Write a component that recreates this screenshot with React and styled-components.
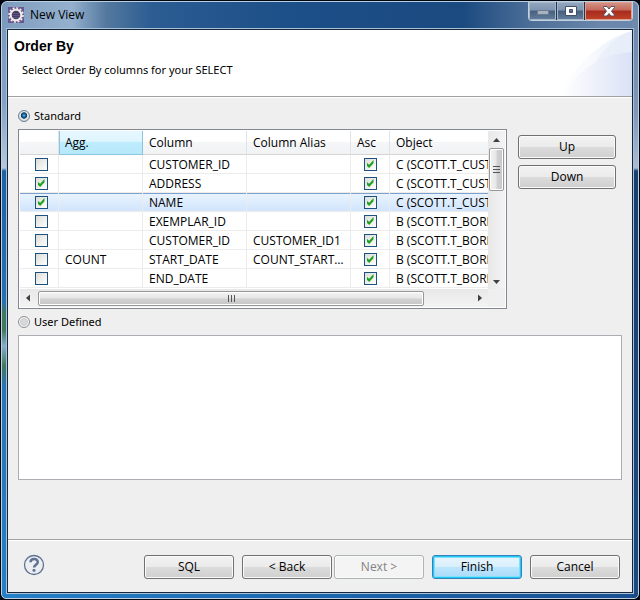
import React, { useState } from 'react';
import styled, { createGlobalStyle, css } from 'styled-components';

const Global = createGlobalStyle`
  *, *::before, *::after { box-sizing: border-box; }
  body { margin: 0; background: #06142c; }
  body, button, input, textarea {
    font-family: "Open Sans", "Segoe UI", sans-serif;
    font-size: 12px;
    line-height: 16px;
    color: #000;
  }
`;

const Window = styled.div`
  min-height: 100vh;
  display: flex;
  flex-direction: column;
  padding: 1px;
  background: #02060e;
`;

const Frame = styled.div`
  flex: 1;
  display: flex;
  flex-direction: column;
  border: 1px solid #b9cfe4;
  border-radius: 6px 6px 5px 5px;
  padding: 0 5px 5px;
  background:
    linear-gradient(#6b87ab 0, #7f97b8 110px, #a9bcd2 166px, #17406f 169px, #1a4a84 100%) right 0 top 0 / 6px 100% no-repeat,
    linear-gradient(#7898bd 0, #84a2c5 100px, #b4c8dc 166px, #1f62a4 169px, #2a70b0 300px, #3f7a5c 312px, #3f7a5c 328px, #86aec8 344px, #3f7a5c 364px, #2a74b4 384px, #2580c6 100%) left 0 top 0 / 6px 100% no-repeat,
    linear-gradient(90deg, #2580c6 0, #1c66ae 50%, #1a4f90 100%) bottom / 100% 6px no-repeat,
    linear-gradient(90deg, #7f9dbf 0, #94b0ce 70px, #54799f 104px, #2b5c92 150px, #1c4e87 300px, #1b4a80 460px, #4d6f98 530px, #6b87ab 600px);
`;

const TitleBar = styled.header`
  height: 27px;
  display: flex;
  align-items: flex-start;
`;

const Title = styled.h1`
  flex: 1;
  display: flex;
  align-items: center;
  gap: 6px;
  margin: 0;
  padding: 5px 0 0 1px;
  font-size: 12px;
  line-height: 16px;
  font-weight: 400;
`;

const Captions = styled.div`
  display: flex;
  border: 1px solid #c3d0de;
  border-top: 0;
  border-radius: 0 0 4px 4px;
  overflow: hidden;
`;

const Caption = styled.button`
  width: ${p => (p.$close ? 47 : 28)}px;
  height: 18px;
  padding: 0;
  display: grid;
  place-items: center;
  border: 0;
  border-right: ${p => (p.$close ? '0' : '1px solid #24344c')};
  box-shadow: inset 0 0 0 1px ${p => (p.$close ? '#e0a090' : '#a5b6c9')};
  background: ${p => (p.$close
    ? 'linear-gradient(#d5968a 0, #c4685a 45%, #a82a1c 50%, #c0442a 100%)'
    : 'linear-gradient(#94a8c0 0, #7e94b0 45%, #46607f 50%, #64809f 100%)')};
`;

const Client = styled.main`
  flex: 1;
  display: flex;
  flex-direction: column;
  border: 1px solid #16263c;
  outline: 1px solid #a9c2da;
  background: #efefef;
`;

const Banner = styled.section`
  height: 67px;
  position: relative;
  padding: 8px 6px 0;
  background: #fff;
  border-bottom: 1px solid #a0a0a0;
`;

const BannerArt = styled.svg`
  position: absolute;
  right: 0;
  top: 0;
`;

const Heading = styled.h2`
  margin: 0;
  font: 700 14px/16px "Liberation Sans", Arial, sans-serif;
`;

const Lead = styled.p`
  margin: 8px 0 0 8px;
  font-family: "Noto Sans", "Segoe UI", sans-serif;
  font-size: 11px;
`;

const Body = styled.section`
  flex: 1;
  padding: 10px 10px 0;
  border-top: 1px solid #fff;
`;

const Choice = styled.label`
  display: flex;
  align-items: center;
  gap: 4px;
  height: 16px;
  font-family: "Noto Sans", "Segoe UI", sans-serif;
  font-size: 11px;
`;

const Radio = styled.input`
  appearance: none;
  width: 12px;
  height: 12px;
  margin: 0;
  border: 1px solid #8a8f94;
  border-radius: 50%;
  background: radial-gradient(circle, #dedede 0, #cfd1d2 50%, #f6f6f6 60%);
  &:checked {
    border-color: #6f7f90;
    background: radial-gradient(circle at 50% 45%, #5cc4ec 0, #1e6ea4 20%, #0b3558 38%, #eef2f5 48%, #cfd4d8 70%);
  }
`;

const Picker = styled.div`
  display: flex;
  gap: 11px;
  margin: 5px 6px 5px 0;
`;

const Moves = styled.div`
  width: 98px;
  display: flex;
  flex-direction: column;
  gap: 6px;
  padding-top: 6px;
`;

const Button = styled.button`
  height: 24px;
  padding: 0;
  border: 1px solid #707070;
  border-radius: 3px;
  box-shadow: inset 0 0 0 1px #fbfbfb;
  background: linear-gradient(#f2f2f2 0, #ebebeb 48%, #dcdcdc 50%, #cfcfcf 100%);
  ${p => p.$primary && css`
    border-color: #3583b8;
    box-shadow: inset 0 0 0 1px #22c8f8, inset 0 0 0 2px #7fe0fb;
    background: linear-gradient(#e9f5fc 0, #d8effc 48%, #bde6fd 50%, #a8dafa 100%);
  `}
  &:disabled {
    border-color: #adb2b5;
    background: #f4f4f4;
    color: #838383;
  }
`;

const Grid = styled.div`
  flex: 1;
  min-width: 0;
  display: grid;
  grid-template-columns: minmax(0, 1fr) 17px;
  grid-template-rows: 158px 18px;
  padding: 1px;
  border: 1px solid #828790;
  background: #fff;
`;

const Viewport = styled.div`
  overflow: hidden;
`;

const Table = styled.table`
  width: 526px;
  table-layout: fixed;
  border-collapse: separate;
  border-spacing: 0;
`;

const Th = styled.th`
  height: 24px;
  padding: 0 6px;
  text-align: left;
  font-weight: 400;
  border-right: 1px solid #dfe3e8;
  border-bottom: 1px solid #d5d5d5;
  background: linear-gradient(#fff 0, #fff 45%, #f5f6f8 50%, #f1f2f4 100%);
  ${p => p.$hot && css`
    border-color: #8bc5de;
    box-shadow: inset 1px 0 0 #8bc5de;
    background: linear-gradient(#e6f7fe 0, #def5fe 45%, #bdecfd 50%, #b6e8fb 100%);
  `}
`;

const Row = styled.tr`
  ${p => p.$selected && css`
    background: linear-gradient(#ebf4fe, #cfe4fd);
    box-shadow: inset 0 1px 0 #7da2ce;
  `}
`;

const Td = styled.td`
  height: 19px;
  padding: 2px 6px 0;
  border-right: 1px solid #ececec;
  border-bottom: 1px solid #ececec;
  white-space: nowrap;
  overflow: hidden;
  text-overflow: ellipsis;
  ${p => p.$lead && css`
    padding-left: 10px;
  `}
`;

const Check = styled.input`
  appearance: none;
  display: block;
  width: 13px;
  height: 13px;
  margin: 0 auto 1px;
  border: 1px solid #1c5180;
  background: linear-gradient(135deg, #dcdcd7, #fff);
  &:checked::before {
    content: "";
    display: block;
    width: 7px;
    height: 8px;
    margin: 1px 2px;
    background: #21a121;
    clip-path: polygon(0 30%, 38% 58%, 100% 0, 100% 40%, 38% 100%, 0 70%);
  }
`;

const VScroll = styled.div`
  display: flex;
  flex-direction: column;
  align-items: center;
  background: linear-gradient(90deg, #e8e8e8, #f3f3f3);
`;

const HScroll = styled.div`
  display: flex;
  align-items: center;
  padding: 1px 0;
  background: linear-gradient(#e8e8e8, #f3f3f3);
`;

const Corner = styled.div`
  background: #efefef;
`;

const Arrow = styled.svg`
  flex: none;
`;

const VThumb = styled.div`
  width: 15px;
  height: 43px;
  display: grid;
  place-items: center;
  border: 1px solid #979797;
  border-radius: 2px;
  box-shadow: inset 0 0 0 1px #fff;
  background: linear-gradient(90deg, #f3f3f3 0, #e6e6e6 48%, #d2d2d2 52%, #c6c6c6 100%);
`;

const HThumb = styled.div`
  flex: 0 0 386px;
  height: 15px;
  display: grid;
  place-items: center;
  border: 1px solid #979797;
  border-radius: 2px;
  box-shadow: inset 0 0 0 1px #fff;
  background: linear-gradient(#f3f3f3 0, #e6e6e6 48%, #d2d2d2 52%, #c6c6c6 100%);
`;

const Spacer = styled.div`
  flex: 1;
`;

const Sql = styled.textarea`
  display: block;
  width: 100%;
  height: 145px;
  margin-top: 5px;
  border: 1px solid #abadb3;
  background: #fff;
  resize: none;
`;

const Footer = styled.footer`
  height: 53px;
  display: flex;
  align-items: center;
  padding: 1px 12px 0 15px;
  border-top: 1px solid #a0a0a0;
  box-shadow: inset 0 1px 0 #fff;
`;

const Help = styled.button`
  width: 22px;
  height: 22px;
  margin: 0 auto 3px 0;
  padding: 0;
  border: 0;
  background: none;
`;

const HelpIcon = styled.svg`
  display: block;
`;

const Actions = styled.div`
  display: grid;
  grid-template-columns: 90px 182px 90px 90px;
  gap: 8px;
`;

const Pair = styled.div`
  display: grid;
  grid-template-columns: 90px 90px;
  gap: 2px;
`;

const columns = [39, 84, 104, 104, 39, 156];

const initialRows = [
  { on: false, agg: '', column: 'CUSTOMER_ID', alias: '', object: 'C (SCOTT.T_CUSTOMER)' },
  { on: true, agg: '', column: 'ADDRESS', alias: '', object: 'C (SCOTT.T_CUSTOMER)' },
  { on: true, agg: '', column: 'NAME', alias: '', object: 'C (SCOTT.T_CUSTOMER)', selected: true },
  { on: false, agg: '', column: 'EXEMPLAR_ID', alias: '', object: 'B (SCOTT.T_BORROW)' },
  { on: false, agg: '', column: 'CUSTOMER_ID', alias: 'CUSTOMER_ID1', object: 'B (SCOTT.T_BORROW)' },
  { on: false, agg: 'COUNT', column: 'START_DATE', alias: 'COUNT_START_DATE', object: 'B (SCOTT.T_BORROW)' },
  { on: false, agg: '', column: 'END_DATE', alias: '', object: 'B (SCOTT.T_BORROW)' },
];

const AppIcon = () => (
  <svg width="16" height="16" viewBox="0 0 16 16" aria-hidden="true">
    <rect width="16" height="16" fill="#6a5690" />
    <circle cx="8" cy="8" r="7" fill="none" stroke="#f4f2ee" strokeWidth="1.6" strokeDasharray="2 1.665" />
    <circle cx="8" cy="8" r="5.3" fill="#453c66" stroke="#f0eeea" strokeWidth="2" />
    <path d="M4.500 6.500h7M4 8.500h8M5 10.500h6" stroke="#5f5684" />
  </svg>
);

export default function App() {
  const [rows, setRows] = useState(initialRows);
  const [mode, setMode] = useState('standard');
  const toggle = i => setRows(rows.map((r, n) => (n === i ? { ...r, on: !r.on } : r)));

  return (
    <Window>
      <Global />
      <Frame>
        <TitleBar>
          <Title><AppIcon />New View</Title>
          <Captions>
            <Caption aria-label="Minimize">
              <svg width="12" height="12"><rect x="0.5" y="5.5" width="11" height="4" fill="#a9b3bf" stroke="#6c7c90" /></svg>
            </Caption>
            <Caption aria-label="Maximize">
              <svg width="12" height="10"><path d="M.5.5h11v9H.5zM4.500 3.500v3h3v-3z" fill="#fff" stroke="#45506a" fillRule="evenodd" /></svg>
            </Caption>
            <Caption $close aria-label="Close">
              <svg width="12" height="11" viewBox="0 0 12 11"><path d="M.5.5h3.500L6 3 8 .5h3.500v1L8.500 5.200l3 3.800v1H8L6 7.500 4 10H.5V9l3-3.800L.5 1.500z" fill="#fff" stroke="#55505e" /></svg>
            </Caption>
          </Captions>
        </TitleBar>
        <Client>
          <Banner>
            <BannerArt width="75" height="66" viewBox="0 0 75 66" aria-hidden="true">
              <defs>
                <linearGradient id="sweep" x1="0" x2="1">
                  <stop offset="0" stopColor="#fff" />
                  <stop offset="0.4" stopColor="#f8fafe" />
                  <stop offset="1" stopColor="#e8eefa" />
                </linearGradient>
                <linearGradient id="arc" x1="0" x2="1">
                  <stop offset="0" stopColor="#fff" />
                  <stop offset="1" stopColor="#dbe2f6" />
                </linearGradient>
              </defs>
              <path d="M2 66C14 42 40 10 75 1V66z" fill="url(#sweep)" />
              <path d="M36 36C46 20 58 6 75 1V66H36z" fill="#e6edf9" opacity=".6" />
              <path d="M4 66C24 36 48 24 75 22V66z" fill="url(#arc)" />
            </BannerArt>
            <Heading>Order By</Heading>
            <Lead>Select Order By columns for your SELECT</Lead>
          </Banner>
          <Body>
            <Choice>
              <Radio type="radio" name="mode" checked={mode === 'standard'} onChange={() => setMode('standard')} />
              Standard
            </Choice>
            <Picker>
              <Grid>
                <Viewport>
                  <Table>
                    <colgroup>{columns.map((w, i) => <col key={i} width={w} />)}</colgroup>
                    <thead>
                      <tr>
                        <Th aria-label="Selected" />
                        <Th $hot>Agg.</Th>
                        <Th>Column</Th>
                        <Th>Column Alias</Th>
                        <Th>Asc</Th>
                        <Th>Object</Th>
                      </tr>
                    </thead>
                    <tbody>
                      {rows.map((r, i) => (
                        <Row key={i} $selected={r.selected}>
                          <Td $lead><Check type="checkbox" aria-label={`Use ${r.column}`} checked={r.on} onChange={() => toggle(i)} /></Td>
                          <Td>{r.agg}</Td>
                          <Td>{r.column}</Td>
                          <Td>{r.alias}</Td>
                          <Td><Check type="checkbox" aria-label={`${r.column} ascending`} defaultChecked /></Td>
                          <Td>{r.object}</Td>
                        </Row>
                      ))}
                    </tbody>
                  </Table>
                </Viewport>
                <VScroll>
                  <Arrow width="17" height="17"><path d="M5 11l3.500-4 3.500 4z" fill="#404040" /></Arrow>
                  <VThumb><svg width="7" height="9"><path d="M0 1.500h7M0 4.500h7M0 7.500h7" stroke="#555" /></svg></VThumb>
                  <Spacer />
                  <Arrow width="17" height="17"><path d="M5 8l3.500 4L12 8z" fill="#404040" /></Arrow>
                </VScroll>
                <HScroll>
                  <Arrow width="18" height="16"><path d="M10 4.500L6 8l4 3.500z" fill="#404040" /></Arrow>
                  <HThumb><svg width="9" height="7"><path d="M1.500 0v7M4.500 0v7M7.500 0v7" stroke="#555" /></svg></HThumb>
                  <Spacer />
                  <Arrow width="18" height="16"><path d="M8 4.500l4 3.500-4 3.500z" fill="#404040" /></Arrow>
                </HScroll>
                <Corner />
              </Grid>
              <Moves>
                <Button>Up</Button>
                <Button>Down</Button>
              </Moves>
            </Picker>
            <Choice>
              <Radio type="radio" name="mode" checked={mode === 'user'} onChange={() => setMode('user')} />
              User Defined
            </Choice>
            <Sql aria-label="User defined order" />
          </Body>
          <Footer>
            <Help aria-label="Help">
              <HelpIcon width="22" height="22" viewBox="0 0 22 22">
                <circle cx="11" cy="11" r="9.500" fill="#eceef2" stroke="#5f7290" strokeWidth="1.300" />
                <path d="M7.500 8.300C7.500 3.800 14.800 3.800 14.800 8c0 2.600-3.700 2.800-3.700 5.400" fill="none" stroke="#5f7290" strokeWidth="2.500" />
                <rect x="9.500" y="15" width="3" height="2.800" rx="1" fill="#5f7290" />
              </HelpIcon>
            </Help>
            <Actions>
              <Button>SQL</Button>
              <Pair>
                <Button>&lt; Back</Button>
                <Button disabled>Next &gt;</Button>
              </Pair>
              <Button $primary>Finish</Button>
              <Button>Cancel</Button>
            </Actions>
          </Footer>
        </Client>
      </Frame>
    </Window>
  );
}
